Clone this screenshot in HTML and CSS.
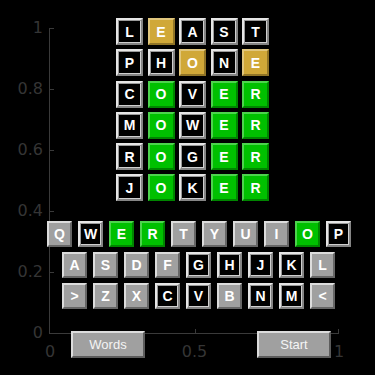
FILE: index.html
```html
<!DOCTYPE html>
<html lang="en">
<head>
  <meta charset="UTF-8">
  <meta name="viewport" content="width=device-width, initial-scale=1">
  <title>Wordle</title>
  <link rel="stylesheet" href="styles.css">
</head>
<body>
  <div class="figure">
    <!-- оси графика: только левая и нижняя линии, подписи тусклые -->
    <div class="axes">
      <span class="ytick" style="top: 0px"></span>
      <span class="ytick" style="top: 61px"></span>
      <span class="ytick" style="top: 122px"></span>
      <span class="ytick" style="top: 183px"></span>
      <span class="ytick" style="top: 244px"></span>
      <span class="ylabel" style="top: 0px">1</span>
      <span class="ylabel" style="top: 61px">0.8</span>
      <span class="ylabel" style="top: 122px">0.6</span>
      <span class="ylabel" style="top: 183px">0.4</span>
      <span class="ylabel" style="top: 244px">0.2</span>
      <span class="ylabel" style="top: 305px">0</span>
      <span class="xtick" style="left: 144.5px"></span>
      <span class="xtick" style="left: 288px"></span>
      <span class="xlabel" style="left: 0px">0</span>
      <span class="xlabel" style="left: 144.5px">0.5</span>
      <span class="xlabel" style="left: 289px">1</span>
    </div>

    <div class="content">
      <!-- поле с попытками -->
      <div class="board">
        <div class="tile black">L</div><div class="tile yellow">E</div><div class="tile black">A</div><div class="tile black">S</div><div class="tile black">T</div>
        <div class="tile black">P</div><div class="tile black">H</div><div class="tile yellow">O</div><div class="tile black">N</div><div class="tile yellow">E</div>
        <div class="tile black">C</div><div class="tile green">O</div><div class="tile black">V</div><div class="tile green">E</div><div class="tile green">R</div>
        <div class="tile black">M</div><div class="tile green">O</div><div class="tile black">W</div><div class="tile green">E</div><div class="tile green">R</div>
        <div class="tile black">R</div><div class="tile green">O</div><div class="tile black">G</div><div class="tile green">E</div><div class="tile green">R</div>
        <div class="tile black">J</div><div class="tile green">O</div><div class="tile black">K</div><div class="tile green">E</div><div class="tile green">R</div>
      </div>

      <!-- клавиатура -->
      <div class="keyboard">
        <div class="key-row first">
          <div class="key gray">Q</div><div class="key black">W</div><div class="key green">E</div><div class="key green">R</div><div class="key gray">T</div>
          <div class="key gray">Y</div><div class="key gray">U</div><div class="key gray">I</div><div class="key green">O</div><div class="key black">P</div>
        </div>
        <div class="key-row">
          <div class="key gray">A</div><div class="key gray">S</div><div class="key gray">D</div><div class="key gray">F</div><div class="key black">G</div>
          <div class="key black">H</div><div class="key black">J</div><div class="key black">K</div><div class="key gray">L</div>
        </div>
        <div class="key-row">
          <div class="key gray">&gt;</div><div class="key gray">Z</div><div class="key gray">X</div><div class="key black">C</div><div class="key black">V</div>
          <div class="key gray">B</div><div class="key black">N</div><div class="key black">M</div><div class="key gray">&lt;</div>
        </div>
      </div>

      <div class="actions">
        <button class="btn">Words</button>
        <button class="btn">Start</button>
      </div>
    </div>
  </div>
</body>
</html>
```
FILE: styles.css
```css
html, body {
  margin: 0;
  padding: 0;
  background: #000;
}
.figure {
  position: relative;
  width: 375px;
  height: 375px;
  overflow: hidden;
  font-family: "Liberation Sans", Arial, sans-serif;
}
/* Оси (фон под игрой) */
.axes {
  position: absolute;
  left: 49px;
  top: 28px;
  width: 289px;
  height: 305px;
  border-left: 1px solid #3a3a3a;
  border-bottom: 1px solid #3a3a3a;
}
.ytick {
  position: absolute;
  left: 0;
  width: 4px;
  height: 1px;
  background: #3a3a3a;
}
.xtick {
  position: absolute;
  bottom: 0;
  width: 1px;
  height: 4px;
  background: #3a3a3a;
}
.ylabel, .xlabel {
  position: absolute;
  color: #353535;
  font-family: "DejaVu Sans", sans-serif;
  font-size: 16px;
  line-height: 16px;
}
.ylabel {
  right: 296px;
  transform: translateY(-50%);
}
.xlabel {
  top: 316px;
  transform: translateX(-50%);
}
/* Основной контент поверх осей */
.content {
  position: relative;
  padding-top: 18px;
}
.board {
  margin-left: 116px;
  display: grid;
  grid-template-columns: repeat(5, 27px);
  grid-auto-rows: 27px;
  column-gap: 4.5px;
  row-gap: 4.3px;
  width: max-content;
}
.tile, .key {
  box-sizing: border-box;
  display: flex;
  align-items: center;
  justify-content: center;
  color: #fff;
  font-weight: bold;
  font-size: 14px;
  border: 2px solid;
}
.black {
  background: #000;
  border-color: #e6e6e6 #858585 #858585 #e6e6e6;
  box-shadow: inset 1px 1px 0 #9a9a9a, inset -1px -1px 0 #d0d0d0;
}
.yellow {
  background: #d0a838;
  border-color: rgba(255, 255, 255, 0.35) rgba(0, 0, 0, 0.3) rgba(0, 0, 0, 0.3) rgba(255, 255, 255, 0.35);
}
.green {
  background: #00c000;
  border-color: rgba(255, 255, 255, 0.3) rgba(0, 0, 0, 0.3) rgba(0, 0, 0, 0.3) rgba(255, 255, 255, 0.3);
}
.gray {
  background: #a0a0a0;
  border-color: #dcdcdc #666 #666 #dcdcdc;
}
/* Клавиатура */
.keyboard {
  margin-top: 19.5px;
  display: flex;
  flex-direction: column;
  gap: 5px;
}
.key-row {
  display: flex;
  gap: 6px;
  padding-left: 62px;
}
.key-row.first {
  padding-left: 47px;
}
.key {
  width: 25px;
  height: 26px;
}
/* Кнопки внизу */
.actions {
  margin-top: 22px;
  display: flex;
  gap: 112px;
  padding-left: 71px;
}
.btn {
  box-sizing: border-box;
  width: 74px;
  height: 27px;
  padding: 0;
  background: #a0a0a0;
  border: 2px solid;
  border-color: #dcdcdc #5c5c5c #5c5c5c #dcdcdc;
  color: #f4f4f4;
  font-family: "Liberation Sans", Arial, sans-serif;
  font-size: 13px;
}
```
